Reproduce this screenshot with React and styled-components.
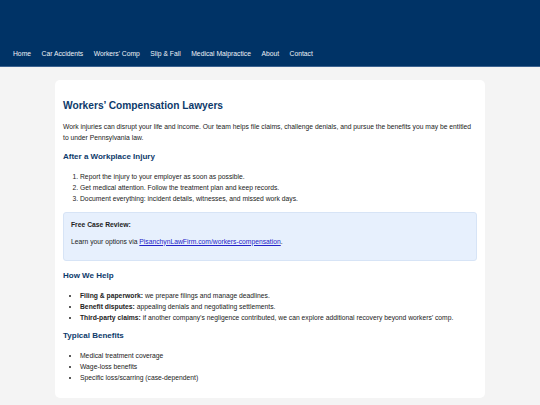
import React from 'react';
import styled, { createGlobalStyle } from 'styled-components';

const GlobalStyle = createGlobalStyle`
  html, body {
    margin: 0;
    padding: 0;
    background: #f4f4f4;
    font-family: 'Liberation Sans', Arial, sans-serif;
    color: #222;
  }
`;

// HEADER
const Header = styled.header`
  height: 67px;
  background: #003366;
  border-bottom: 1.5px solid #3c6390;
  display: flex;
  align-items: flex-end;
  padding: 0 13px 8px;
  box-sizing: border-box;
`;

const Nav = styled.nav`
  display: flex;
  gap: 10.5px;
`;

const NavLink = styled.a`
  color: #eef2f7;
  font-size: 6.75px;
  line-height: 8px;
  text-decoration: none;
`;

// CONTENT
const Card = styled.main`
  max-width: 430px;
  margin: 13px auto 0;
  background: #fff;
  border-radius: 5px;
  padding: 19px 8px 15.5px;
  box-sizing: border-box;
`;

const Title = styled.h1`
  margin: 0;
  font-size: 10.2px;
  line-height: 14px;
  color: #0d3a6b;
`;

const Text = styled.p`
  margin: ${(p) => p.$mt || '0'} 0 0;
  font-size: 6.75px;
  line-height: 11px;
`;

const Heading = styled.h2`
  margin: ${(p) => p.$mt || '10px'} 0 0;
  font-size: 8px;
  line-height: 10px;
  color: #0d3a6b;
`;

const List = styled.ul`
  margin: ${(p) => p.$mt || '8.5px'} 0 0;
  padding-left: 17px;
  font-size: 6.75px;
  line-height: 11px;
  list-style: ${(p) => (p.$ordered ? 'decimal' : 'disc')};
`;

const Callout = styled.div`
  margin-top: 8.5px;
  background: #e7f0fd;
  border: 1px solid #d7e4f6;
  border-radius: 3px;
  padding: 5.5px 7px 13.5px;
`;

const Anchor = styled.a`
  color: #2323c8;
  text-decoration: underline;
`;

const steps = [
  'Report the injury to your employer as soon as possible.',
  'Get medical attention. Follow the treatment plan and keep records.',
  'Document everything: incident details, witnesses, and missed work days.',
];

const help = [
  { label: 'Filing & paperwork:', text: ' we prepare filings and manage deadlines.' },
  { label: 'Benefit disputes:', text: ' appealing denials and negotiating settlements.' },
  {
    label: 'Third-party claims:',
    text: ' if another company\u2019s negligence contributed, we can explore additional recovery beyond workers\u2019 comp.',
  },
];

const benefits = [
  'Medical treatment coverage',
  'Wage-loss benefits',
  'Specific loss/scarring (case-dependent)',
];

const navItems = [
  'Home',
  'Car Accidents',
  "Workers' Comp",
  'Slip & Fall',
  'Medical Malpractice',
  'About',
  'Contact',
];

export default function App() {
  return (
    <>
      <GlobalStyle />
      <Header>
        <Nav>
          {navItems.map((item) => (
            <NavLink key={item} href='#'>
              {item}
            </NavLink>
          ))}
        </Nav>
      </Header>

      <Card>
        <Title>Workers’ Compensation Lawyers</Title>
        <Text $mt='7.5px'>
          Work injuries can disrupt your life and income. Our team helps file claims, challenge
          denials, and pursue the benefits you may be entitled to under Pennsylvania law.
        </Text>

        <Heading $mt='9.5px'>After a Workplace Injury</Heading>
        <List as='ol' $ordered>
          {steps.map((s) => (
            <li key={s}>{s}</li>
          ))}
        </List>

        <Callout>
          <Text>
            <strong>Free Case Review:</strong>
          </Text>
          <Text $mt='6px'>
            Learn your options via{' '}
            <Anchor href='#'>PisanchynLawFirm.com/workers-compensation</Anchor>.
          </Text>
        </Callout>

        <Heading>How We Help</Heading>
        <List>
          {help.map((h) => (
            <li key={h.label}>
              <strong>{h.label}</strong>
              {h.text}
            </li>
          ))}
        </List>

        <Heading $mt='8.5px'>Typical Benefits</Heading>
        <List>
          {benefits.map((b) => (
            <li key={b}>{b}</li>
          ))}
        </List>
      </Card>
    </>
  );
}
